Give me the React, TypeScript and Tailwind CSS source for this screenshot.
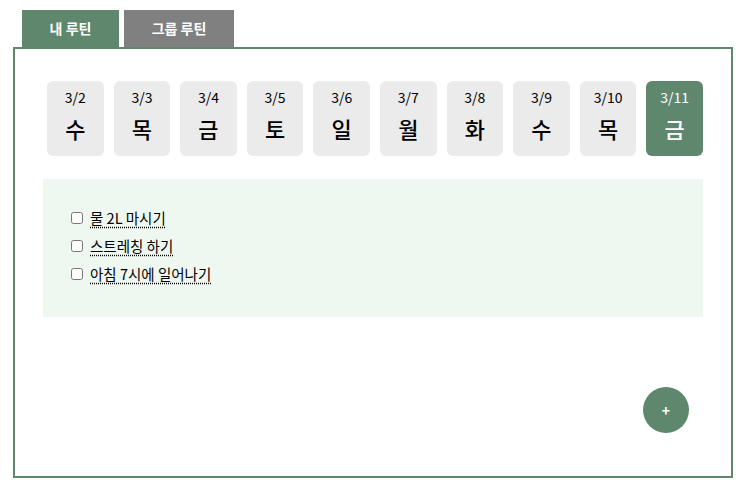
import React from "react";

const days = [
  ["3/2", "수"],
  ["3/3", "목"],
  ["3/4", "금"],
  ["3/5", "토"],
  ["3/6", "일"],
  ["3/7", "월"],
  ["3/8", "화"],
  ["3/9", "수"],
  ["3/10", "목"],
  ["3/11", "금"],
];

const items = ["물 2L 마시기", "스트레칭 하기", "아침 7시에 일어나기"];

export default function App() {
  return (
    <div
      className="w-[745px] h-[493px] bg-white pt-[10px]"
      style={{ fontFamily: '"Noto Sans CJK KR", "Noto Sans", sans-serif' }}
    >
      <div className="flex ml-[22px] gap-[5px]">
        <div className="w-[97px] h-[37px] bg-[#5f876e] text-white font-bold text-[14px] flex items-center justify-center">
          내 루틴
        </div>
        <div className="w-[110px] h-[37px] bg-[#808080] text-white font-bold text-[14px] flex items-center justify-center">
          그룹 루틴
        </div>
      </div>
      <div className="ml-[13px] w-[720px] h-[431px] border-2 border-[#5f876e] px-[28px] pt-[32px]">
        <div className="flex gap-[10px] ml-[4px]">
          {days.map(([d, w], i) => {
            const active = i === days.length - 1;
            return (
              <div
                key={d}
                className={
                  "flex-1 h-[75px] rounded-[6px] flex flex-col items-center pt-[6px] " +
                  (active ? "bg-[#5f876e] text-white" : "bg-[#ebebeb] text-black")
                }
              >
                <div className="text-[14px] leading-[20px]">{d}</div>
                <div className="text-[22px] leading-[30px] font-medium mt-[6px]">{w}</div>
              </div>
            );
          })}
        </div>
        <div className="mt-[23px] h-[138px] bg-[#eef8f1] pl-[28px] pt-[25px]">
          {items.map((t) => (
            <div key={t} className="flex items-center h-[28px]">
              <input type="checkbox" className="w-[12px] h-[12px] m-0" />
              <span className="ml-[7px] text-[14.5px] text-black underline decoration-dotted underline-offset-[3px]">
                {t}
              </span>
            </div>
          ))}
        </div>
        <div className="flex justify-end mt-[70px] pr-[14px]">
          <div className="w-[46px] h-[46px] rounded-full bg-[#5f876e] text-white text-[14px] font-bold flex items-center justify-center">
            +
          </div>
        </div>
      </div>
    </div>
  );
}
